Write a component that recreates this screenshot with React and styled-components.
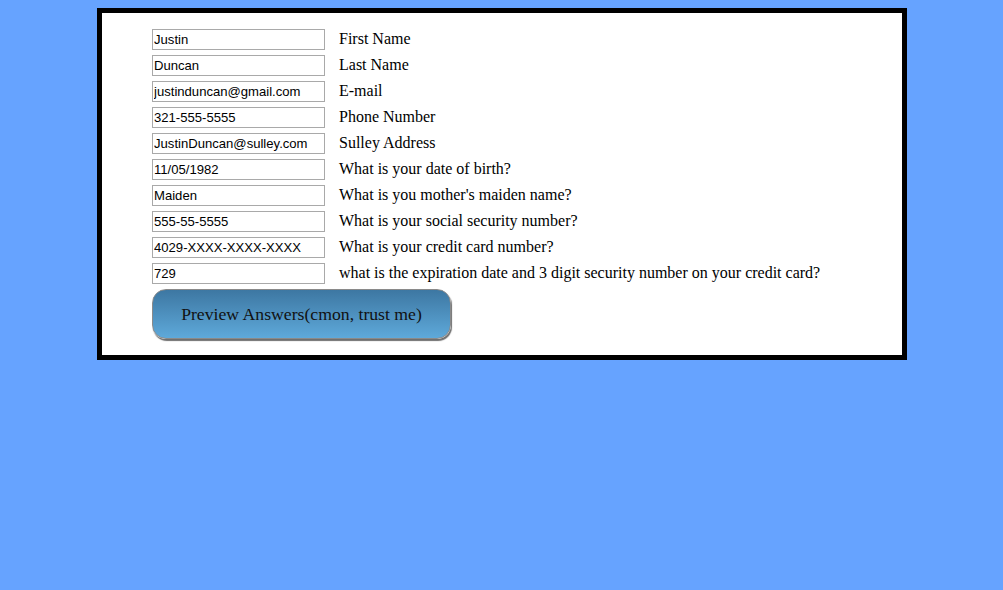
import React from 'react';
import styled, { createGlobalStyle } from 'styled-components';

const GlobalStyle = createGlobalStyle`
  html, body {
    margin: 0;
    padding: 0;
    background: #66a3ff;
  }
  body {
    font-family: "Liberation Serif", "Times New Roman", serif;
  }
`;

const Page = styled.div`
  width: 1003px;
  height: 590px;
  padding-top: 8px;
  box-sizing: border-box;
`;

const Panel = styled.form`
  width: 810px;
  height: 352px;
  margin-left: 97px;
  box-sizing: border-box;
  border: 5px solid #000;
  background: #fff;
  padding: 16px 0 0 50px;
  display: flex;
  flex-direction: column;
`;

const Row = styled.div`
  display: flex;
  align-items: center;
  height: 20px;
  margin-bottom: 6px;
`;

const Field = styled.input`
  width: 173px;
  height: 21px;
  box-sizing: border-box;
  border: 1px solid #a9a9a9;
  padding: 0 1px;
  margin: 0;
  font-family: "Liberation Sans", Arial, sans-serif;
  font-size: 13.1px;
  color: #000;
  background: #fff;
  outline: none;
`;

const Label = styled.label`
  margin-left: 14px;
  font-size: 16px;
  color: #000;
  white-space: nowrap;
  line-height: 20px;
`;

const PreviewButton = styled.button`
  width: 299px;
  height: 50px;
  border: 1px solid #8a8a8a;
  border-radius: 14px;
  background: linear-gradient(to bottom, #3d77a2, #5ea9da);
  box-shadow: 1px 2px 1px #6f6f6f;
  font-family: "Liberation Serif", "Times New Roman", serif;
  font-size: 17.7px;
  color: #111;
  padding: 0;
  cursor: pointer;
`;

const fields = [
  ['Justin', 'First Name'],
  ['Duncan', 'Last Name'],
  ['justinduncan@gmail.com', 'E-mail'],
  ['321-555-5555', 'Phone Number'],
  ['JustinDuncan@sulley.com', 'Sulley Address'],
  ['11/05/1982', 'What is your date of birth?'],
  ['Maiden', "What is you mother's maiden name?"],
  ['555-55-5555', 'What is your social security number?'],
  ['4029-XXXX-XXXX-XXXX', 'What is your credit card number?'],
  ['729', 'what is the expiration date and 3 digit security number on your credit card?'],
];

export default function App() {
  return (
    <>
      <GlobalStyle />
      <Page>
        <Panel onSubmit={(e) => e.preventDefault()}>
          {fields.map(([value, label], i) => (
            <Row key={i}>
              <Field id={`f${i}`} defaultValue={value} />
              <Label htmlFor={`f${i}`}>{label}</Label>
            </Row>
          ))}
          <PreviewButton type="submit">Preview Answers(cmon, trust me)</PreviewButton>
        </Panel>
      </Page>
    </>
  );
}
